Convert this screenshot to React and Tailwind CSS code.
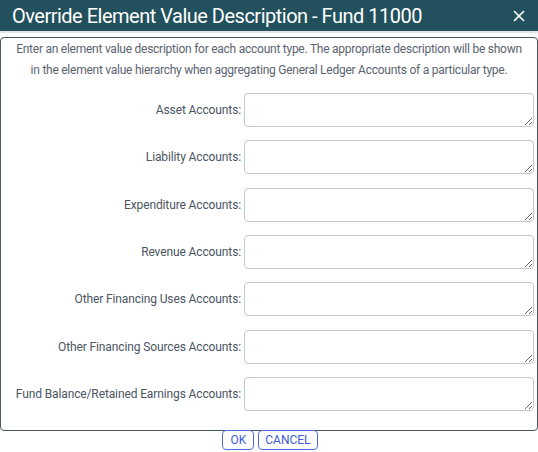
import React from "react";
import { X } from "lucide-react";

const rows = [
  "Asset Accounts:",
  "Liability Accounts:",
  "Expenditure Accounts:",
  "Revenue Accounts:",
  "Other Financing Uses Accounts:",
  "Other Financing Sources Accounts:",
  "Fund Balance/Retained Earnings Accounts:",
];

export default function App() {
  return (
    <div className="w-[538px] h-[452px] bg-white overflow-hidden font-['Roboto',sans-serif]">
      {/* Title bar */}
      <div className="h-[33px] bg-[#22505c] flex items-center justify-between pl-[12px] pr-[10px] border-b-2 border-[#e3e6e8]">
        <span className="text-white text-[20px] leading-none tracking-[-0.5px]">Override Element Value Description - Fund 11000</span>
        <X className="w-[18px] h-[18px] text-white" strokeWidth={2.25} />
      </div>

      <div className="pt-[4px]">
        <div className="border border-[#4b5563] rounded-[4px] h-[394px] pt-[1px]">
          <p className="text-center text-[12px] leading-[21px] tracking-[-0.25px] text-[#5b6470] px-[14px]">
            Enter an element value description for each account type. The appropriate description will be shown in the element value hierarchy when aggregating General Ledger Accounts of a particular type.
          </p>

          <div className="flex flex-col gap-[13.33px] mt-[12px]">
            {rows.map((label) => (
              <div key={label} className="flex items-center">
                <label className="w-[243px] text-right text-[12px] tracking-[-0.12px] text-[#4b5563] pr-[3px]">{label}</label>
                <textarea className="w-[290px] h-[34px] border border-[#c4c7cb] rounded-[4px] resize-y outline-none" />
              </div>
            ))}
          </div>
        </div>
      </div>

      <div className="flex justify-center gap-[4px] -mt-[1px] pl-[2px]">
        <button className="h-[20px] px-[7px] border border-[#4f6fe0] rounded-[4px] text-[12px] text-[#3d5bd9] leading-none">OK</button>
        <button className="h-[20px] px-[6px] border border-[#4f6fe0] rounded-[4px] text-[12px] text-[#3d5bd9] leading-none">CANCEL</button>
      </div>
    </div>
  );
}
